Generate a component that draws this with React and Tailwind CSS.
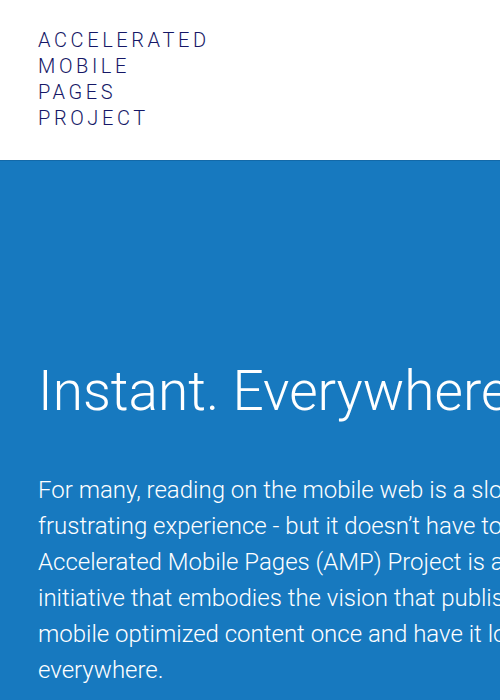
import React from "react";

const App = () => {
  return (
    <div className="w-[500px] h-[700px] overflow-hidden bg-[#1779bf] font-['Roboto',sans-serif]">
      <header className="h-[160px] bg-white pl-[38px] pt-[27px]">
        <div className="text-[20px] leading-[26px] tracking-[3.6px] text-[#151766] font-light">
          <div>ACCELERATED</div>
          <div>MOBILE</div>
          <div>PAGES</div>
          <div>PROJECT</div>
        </div>
      </header>
      <section className="border-t border-[#1369a8] pl-[38px] pt-[198px] w-[740px] text-white font-light">
        <h1 className="text-[55px] leading-[64px]">Instant. Everywhere.</h1>
        <p className="mt-[49px] w-[670px] text-[24px] leading-[36px]">
          For many, reading on the mobile web is a slow, clunky and frustrating
          experience - but it doesn’t have to be. The Accelerated Mobile Pages
          (AMP) Project is an open source initiative that embodies the vision
          that publishers can create mobile optimized content once and have it
          load instantly everywhere.
        </p>
      </section>
    </div>
  );
};

export default App;
